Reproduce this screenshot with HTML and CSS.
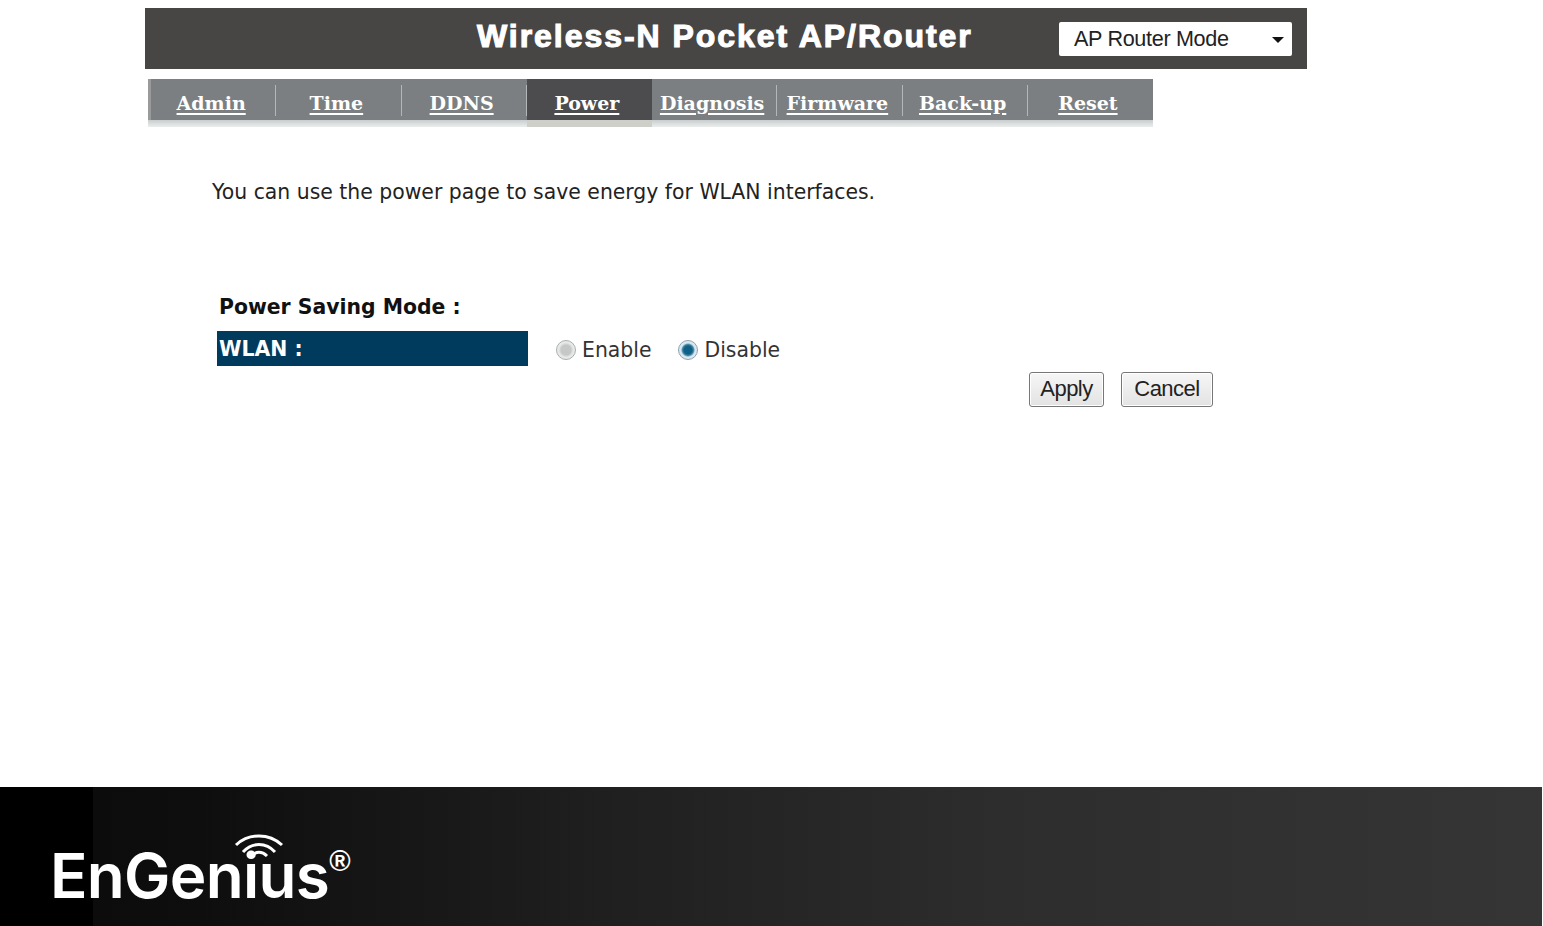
FILE: index.html
```html
<!DOCTYPE html>
<html lang="en">
<head>
<meta charset="utf-8">
<title>Wireless-N Pocket AP/Router</title>
<link rel="stylesheet" href="styles.css">
</head>
<body>
<div class="page">
  <main class="main">
    <header class="header">
      <h1 class="title">Wireless-N Pocket AP/Router</h1>
      <div class="mode">
        <span class="mode-text">AP Router Mode</span>
        <span class="mode-caret"></span>
      </div>
    </header>
    <nav class="tabs">
      <a class="tab" href="#">Admin</a>
      <a class="tab" href="#">Time</a>
      <a class="tab" href="#">DDNS</a>
      <a class="tab tab-active" href="#">Power</a>
      <a class="tab" href="#">Diagnosis</a>
      <a class="tab" href="#">Firmware</a>
      <a class="tab" href="#">Back-up</a>
      <a class="tab" href="#">Reset</a>
    </nav>
    <p class="intro">You can use the power page to save energy for WLAN interfaces.</p>
    <section class="form">
      <h2 class="section-title">Power Saving Mode :</h2>
      <div class="row">
        <div class="row-label">WLAN :</div>
        <label class="choice"><input class="radio" type="radio" name="wlan">Enable</label>
        <label class="choice"><input class="radio" type="radio" name="wlan" checked>Disable</label>
      </div>
      <div class="actions">
        <button class="btn btn-apply" type="button">Apply</button>
        <button class="btn btn-cancel" type="button">Cancel</button>
      </div>
    </section>
  </main>
  <footer class="footer">
    <div class="logo">
      <span class="logo-text">EnGenius</span><span class="logo-reg">®</span>
      <svg class="logo-wifi" viewBox="0 0 56 24" width="56" height="24" aria-hidden="true">
        <path d="M5 12 C18 0 38 0 51 12" fill="none" stroke="#fff" stroke-width="3"/>
        <path d="M12 19 C21 9 35 9 44 19" fill="none" stroke="#fff" stroke-width="3"/>
        <path d="M20 23 C25 18 31 18 36 23" fill="none" stroke="#fff" stroke-width="3"/>
      </svg>
    </div>
  </footer>
</div>
</body>
</html>
```

FILE: styles.css
```css
* { box-sizing: border-box; }
html, body { margin: 0; padding: 0; background: #fff; }
.page {
  width: 1543px;
  height: 926px;
  display: flex;
  flex-direction: column;
  overflow: hidden;
}
.main { flex: 1; padding-top: 8px; }

.header {
  margin-left: 145px;
  width: 1162px;
  height: 61px;
  background: #484545;
  display: flex;
  align-items: center;
  padding: 0 15px 0 332px;
  justify-content: space-between;
}
.title {
  margin: -6px 0 0;
  font: bold 32px/1 "Liberation Sans", Arial, sans-serif;
  letter-spacing: 1.95px;
  color: #fff;
  -webkit-text-stroke: 1.1px #fff;
  white-space: nowrap;
}
.mode {
  width: 233px;
  height: 34px;
  margin-top: 1px;
  background: #fff;
  border-radius: 2px;
  display: flex;
  align-items: center;
  justify-content: space-between;
  padding: 0 8px 0 15px;
}
.mode-text {
  font: 22.5px/1 "Liberation Sans", Arial, sans-serif;
  color: #222;
  letter-spacing: -0.35px;
  transform: scaleX(0.96);
  transform-origin: left center;
  white-space: nowrap;
}
.mode-caret {
  width: 0;
  height: 0;
  border-left: 6px solid transparent;
  border-right: 6px solid transparent;
  border-top: 6px solid #111;
  margin-top: 2px;
}

.tabs {
  margin: 10px 0 0 148px;
  width: 1005px;
  height: 48px;
  display: flex;
  padding-left: 3px;
  background:
    linear-gradient(#9a9a9a, #9a9a9a) left top / 3px 41px no-repeat,
    linear-gradient(#7b7f81 0, #7b7f81 41px, #c9cdce 41px, #eceeee 48px);
}
.tab {
  position: relative;
  flex: 1 1 0;
  height: 41px;
  display: flex;
  align-items: center;
  justify-content: center;
  font: bold 19px/1 "DejaVu Serif", serif;
  color: #fff;
  text-decoration: underline;
  text-decoration-thickness: 2px;
  text-underline-offset: 3px;
  white-space: nowrap;
  padding: 7px 5px 0 0;
}
.tab::after {
  content: "";
  position: absolute;
  right: 0;
  top: 6px;
  height: 31px;
  width: 1px;
  background: #b4b7b8;
}
.tab:last-child::after { display: none; }
.tab-active {
  background: #4c4c4e;
  height: 48px;
  padding-bottom: 7px;
  box-shadow: inset 0 -7px 0 #cfcfc9;
}
.tab-active::after { display: none; }

.intro {
  margin: 53px 0 0 212px;
  font: 20.4px/24px "DejaVu Sans", Verdana, sans-serif;
  color: #222;
  white-space: nowrap;
}

.form { margin: 91px 0 0 217px; width: 996px; }
.section-title {
  margin: 0 0 12px 2px;
  font: bold 20.4px/24px "DejaVu Sans", Verdana, sans-serif;
  color: #111;
}
.row { display: flex; align-items: center; height: 35px; }
.row-label {
  width: 311px;
  height: 35px;
  background: #003a5c;
  color: #fff;
  padding: 1px 0 0 2px;
  font: bold 20.4px/34px "DejaVu Sans", Verdana, sans-serif;
  margin-right: 28px;
}
.choice {
  display: flex;
  align-items: center;
  gap: 6px;
  margin-right: 27px;
  font: 20.4px/24px "DejaVu Sans", Verdana, sans-serif;
  color: #333;
  padding-top: 2px;
}
.radio {
  appearance: none;
  width: 20px;
  height: 20px;
  margin: 0;
  border-radius: 50%;
  border: 1px solid #a8aeb0;
  background: radial-gradient(circle, #c6c8c8 0 5px, #e4e6e6 7px, #f6f6f6 100%);
}
.radio:checked {
  border-color: #8aa2b4;
  background: radial-gradient(circle, #0f5f86 0 4px, #3f86a8 5.5px, #d8e4ec 7px, #eef3f6 100%);
}

.actions {
  display: flex;
  justify-content: flex-end;
  gap: 17px;
  margin-top: 6px;
}
.btn {
  height: 35px;
  padding: 0 0 1px;
  font: 22px/1 "Liberation Sans", Arial, sans-serif;
  letter-spacing: -0.5px;
  color: #222;
  background: linear-gradient(#f6f6f6, #e3e3e3);
  border: 1px solid #777;
  border-radius: 3px;
  box-shadow: inset 0 0 0 1px #fff;
}
.btn-apply { width: 75px; }
.btn-cancel { width: 92px; }

.footer {
  height: 139px;
  width: 1542px;
  flex: none;
  background: linear-gradient(90deg, #000 0, #000 93px, #0c0c0c 93px, #0e0e0e 200px, #1f1f1f 600px, #2d2d2d 1000px, #353535 100%);
  padding: 51px 0 0 50px;
}
.logo {
  position: relative;
  height: 76px;
  display: flex;
  align-items: flex-start;
}
.logo-text {
  font: 600 62px/76px Inter, "Liberation Sans", sans-serif;
  letter-spacing: -0.7px;
  color: #fff;
}
.logo-reg {
  font: bold 29px/1 "Liberation Sans", Arial, sans-serif;
  color: #fff;
  margin: 9px 0 0 0;
}
.logo-wifi {
  position: absolute;
  left: 181px;
  top: -5px;
}
```
